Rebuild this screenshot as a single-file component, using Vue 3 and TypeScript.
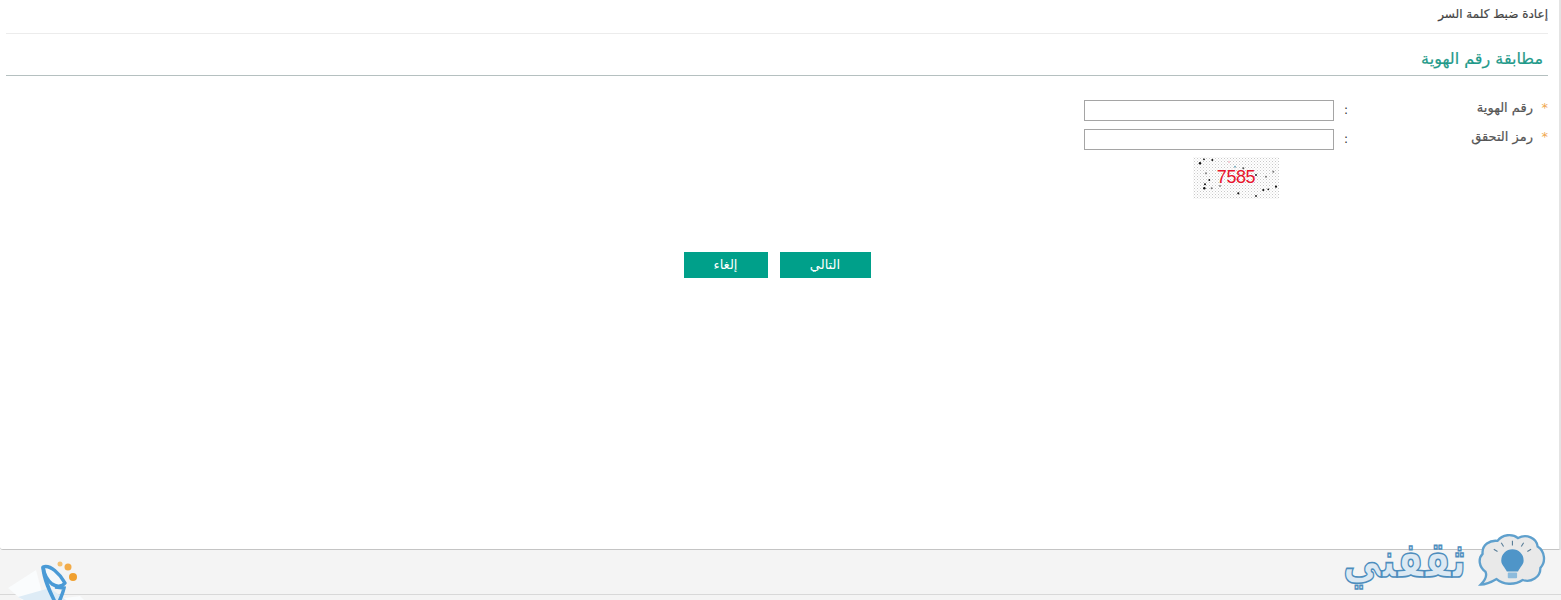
<script setup lang="ts">
// x, y, radius, colour of the captcha noise
const specks: [number, number, number, string][] = [
  [7, 6.3, 1.2, '#111'], [11, 2.3, 0.9, '#111'], [19.3, 3, 1, '#111'], [12, 27.3, 1, '#111'], [11.3, 31.3, 1.2, '#111'],
  [18.7, 31.3, 1, '#777'], [16.3, 23, 0.9, '#111'], [45.3, 36.3, 1.1, '#111'], [63, 39, 0.9, '#111'], [70.3, 33, 1.1, '#111'],
  [75.3, 32.3, 0.9, '#111'], [83, 29.7, 1.1, '#111'], [63, 18, 0.9, '#111'], [73, 19.7, 1, '#777'], [80.3, 14.7, 1, '#777'],
  [50.3, 11.3, 1, '#555'], [42, 9.7, 1, '#7ab'], [13, 16.3, 1.1, '#888'], [27, 29, 1, '#888'], [36, 5, 0.8, '#e9a'],
];
</script>

<template>
  <div class="page" dir="rtl">
    <main class="panel">
      <h1 class="crumb">إعادة ضبط كلمة السر</h1>
      <h2 class="section-title">مطابقة رقم الهوية</h2>

      <form class="form" @submit.prevent>
        <label class="label"><span class="star">*</span>رقم الهوية</label>
        <span class="colon">:</span>
        <input class="field" type="text" />

        <label class="label"><span class="star">*</span>رمز التحقق</label>
        <span class="colon">:</span>
        <input class="field" type="text" />

        <div class="captcha" dir="ltr">
          <svg class="specks" width="86" height="42" viewBox="0 0 86 42">
            <circle v-for="(s, i) in specks" :key="i" :cx="s[0]" :cy="s[1]" :r="s[2]" :fill="s[3]" />
          </svg>
          <span class="captcha-code">7585</span>
        </div>

        <div class="actions">
          <button type="button" class="btn next">التالي</button>
          <button type="button" class="btn cancel">إلغاء</button>
        </div>
      </form>
    </main>

    <footer class="footer">
      <div class="footer-rule"></div>
      <div class="brand" dir="ltr">
        <span class="brand-name" dir="rtl">ثقفني</span>
        <svg class="bubble" width="69" height="55" viewBox="0 0 74 58">
          <path d="M4 56 C10 50 11 46 9 42 C2 37 1 28 6 23 C5 13 14 8 22 9 C27 2 38 1 44 6 C53 1 64 6 65 15 C73 20 74 32 68 38 C68 48 58 54 49 51 C40 57 28 56 21 50 C16 53 10 56 4 56 Z" fill="#e9e9e9" stroke="#5fa0cd" stroke-width="2.500" />
          <path d="M26 30 a12 12 0 1 1 24 0 c0 5 -4 7 -6 12 h-12 c-2 -5 -6 -7 -6 -12 Z" fill="#4f95c8" />
          <rect x="33" y="43" width="10" height="6" rx="1" fill="#8dbbdc" />
          <path d="M38 9 v5 M26 11 l2.500 4 M50 11 l-2.500 4 M18 18 l4 2.500 M58 18 l-4 2.500" stroke="#5b7f99" stroke-width="1.200" fill="none" />
        </svg>
      </div>
      <div class="mark">
        <svg width="84" height="50" viewBox="0 0 84 50">
          <path d="M8 38 L36 20 L44 50 L22 50 Z" fill="#fafcfd" />
          <path d="M50 50 L80 46 L84 50 Z" fill="#fafcfd" />
          <path d="M18 47 L50 38 L66 50 L24 50 Z" fill="#deecf6" />
          <path d="M43 17 C50 14 60 24 65 33 C62 37 56 37 52 34 C47 30 44 24 43 17 Z" fill="#f4f8fb" stroke="#4a9ad6" stroke-width="3.500" stroke-linejoin="round" />
          <path d="M43 17 C44 30 50 42 55 52 M55 37 L64 38 C63 43 61 47 59 52" fill="none" stroke="#4a9ad6" stroke-width="3.500" />
          <circle cx="60" cy="14" r="2.500" fill="#f5c070" />
          <circle cx="68" cy="17" r="3.500" fill="#f2ab48" />
          <circle cx="73" cy="27" r="4" fill="#f0a030" />
        </svg>
      </div>
    </footer>
  </div>
</template>

<style>
html, body { margin: 0; background: #fff; }
</style>

<style scoped>
.page {
  width: 1561px;
  height: 600px;
  overflow: hidden;
  position: relative;
  background: #f4f4f4;
  font-family: "DejaVu Sans", "Liberation Sans", sans-serif;
  display: flex;
  flex-direction: column;
}
.panel {
  height: 550px;
  box-sizing: border-box;
  background: #fff;
  border-bottom: 1px solid #c4c4c4;
  border-right: 2px solid #e4e4e4;
  border-radius: 0 0 0 3px;
  padding: 0 11px 0 6px;
  flex: none;
}
.crumb {
  margin: 0;
  height: 33px;
  line-height: 28px;
  font-size: 12px;
  font-weight: 400;
  color: #444;
  -webkit-text-stroke: 0.2px #444;
  border-bottom: 1px solid #ececec;
}
.section-title {
  margin: 0;
  height: 41px;
  line-height: 50px;
  padding-right: 5px;
  font-size: 16px;
  font-weight: 400;
  color: #1f9a8a;
  -webkit-text-stroke: 0.2px #1f9a8a;
  border-bottom: 1px solid #b5c0c0;
}
.form {
  display: grid;
  grid-template-columns: 188px 26px 250px 1fr;
  row-gap: 8px;
  padding-top: 24px;
  align-items: start;
}
.label {
  grid-column: 1;
  font-size: 13px;
  line-height: 16px;
  color: #555;
  -webkit-text-stroke: 0.2px #555;
}
.star {
  display: inline-block;
  width: 15px;
  color: #f0a850;
  -webkit-text-stroke: 0;
}
.colon {
  grid-column: 2;
  font-size: 12px;
  line-height: 21px;
  text-align: center;
  color: #333;
  margin-right: 2px;
}
.field {
  grid-column: 3;
  width: 250px;
  height: 21px;
  box-sizing: border-box;
  border: 1px solid #a5a5a5;
  background: #fff;
  padding: 0;
  margin: 0;
}
.captcha {
  grid-column: 3;
  justify-self: center;
  position: relative;
  width: 86px;
  height: 42px;
  margin: -1px 0 0 54px;
  background-image:
    radial-gradient(#c8c8c8 0.5px, transparent 0.7px),
    radial-gradient(#d6d6d6 0.5px, transparent 0.7px);
  background-size: 3px 3px, 3px 3px;
  background-position: 0 0, 1.500px 1.500px;
  text-align: center;
}
.specks { position: absolute; inset: 0; }
.captcha-code {
  position: relative;
  font-family: "Liberation Sans", sans-serif;
  font-size: 18px;
  letter-spacing: -0.4px;
  line-height: 40px;
  color: #e8142c;
}
.actions {
  grid-column: 1 / -1;
  display: flex;
  justify-content: center;
  gap: 12px;
  margin-top: 45px;
}
.btn {
  height: 26px;
  border: 0;
  background: #00a08a;
  color: #fff;
  font-family: inherit;
  font-size: 13px;
  padding: 0 0 2px;
}
.next { width: 91px; }
.cancel { width: 84px; }
.footer {
  flex: 1;
  position: relative;
}
.footer-rule {
  position: absolute;
  left: 0;
  right: 0;
  top: 44px;
  border-top: 1px solid #d8d8d8;
}
.brand {
  position: absolute;
  z-index: 2;
  right: 15px;
  top: -18px;
  display: flex;
  align-items: center;
  gap: 11px;
}
.brand-name {
  display: inline-block;
  font-size: 38px;
  font-weight: 700;
  line-height: 54px;
  color: #dce9f3;
  -webkit-text-stroke: 1.200px #4d8dbd;
  transform: scaleY(1.3);
}
.mark {
  position: absolute;
  z-index: 2;
  left: 0;
  top: 0;
  line-height: 0;
}
</style>
